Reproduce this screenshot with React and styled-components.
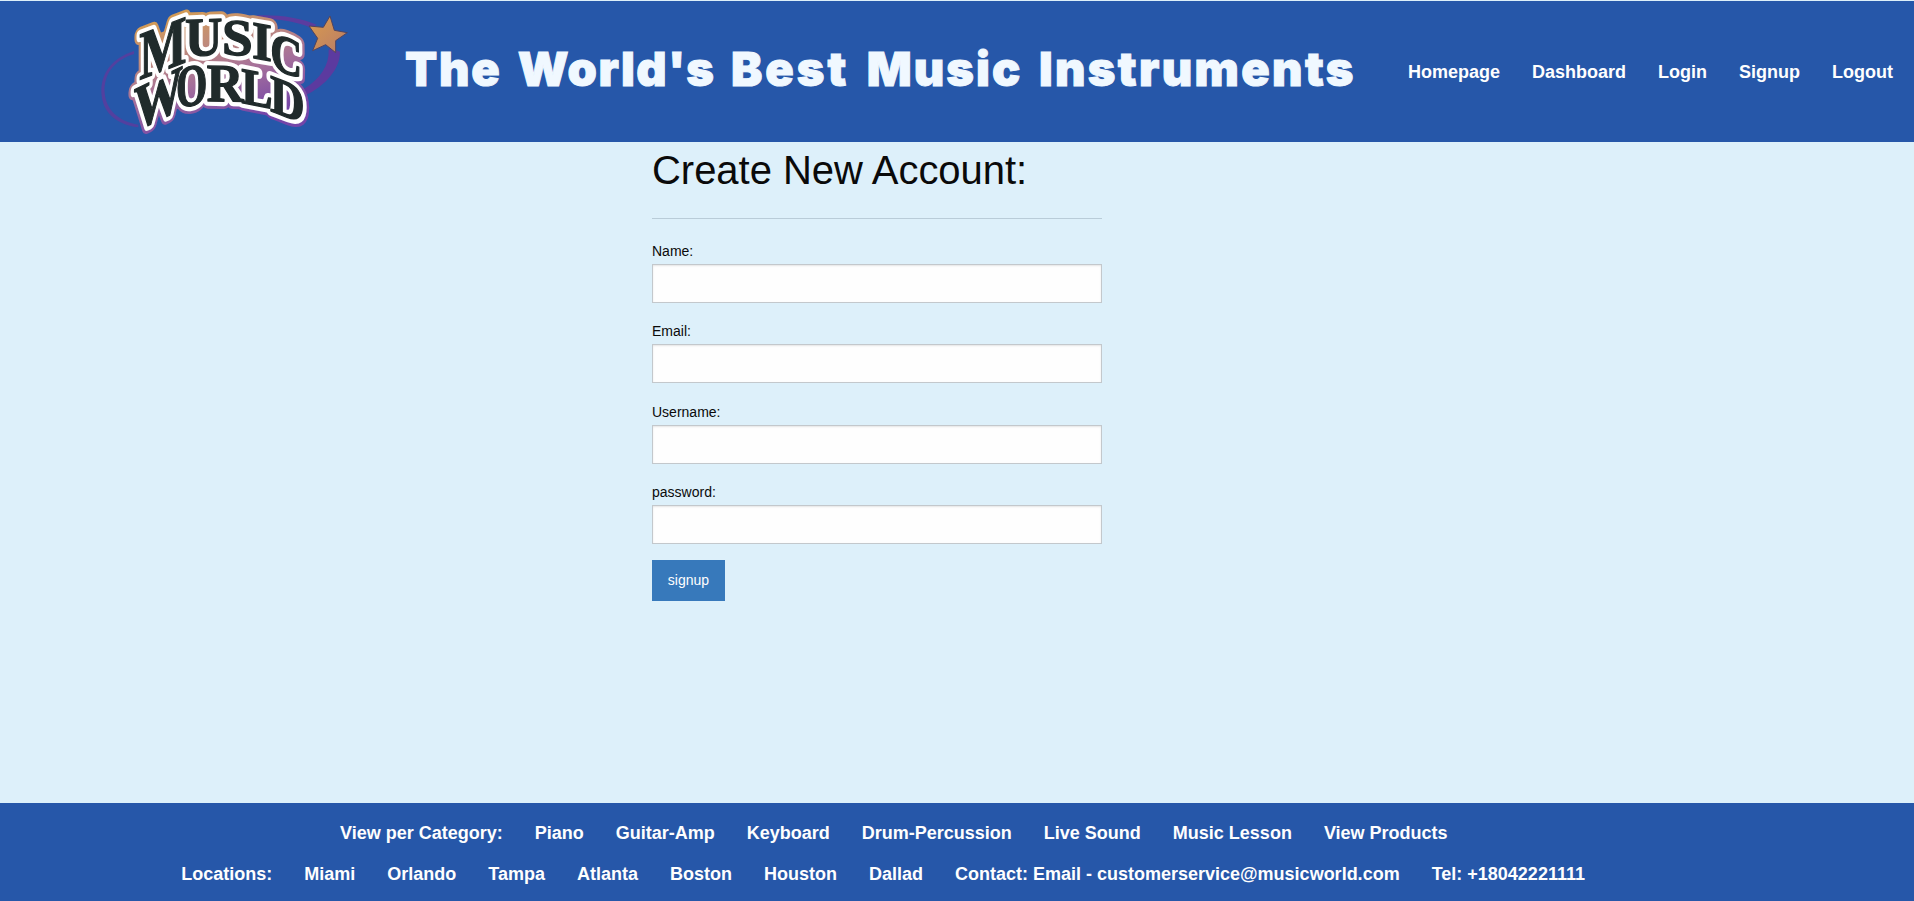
import React from "react";
import styled, { createGlobalStyle } from "styled-components";

const GlobalStyle = createGlobalStyle`
  *, *::before, *::after { box-sizing: border-box; }
  body {
    margin: 0;
    background: #ddf0fa;
    color: #0a0a0a;
    font-family: "Liberation Sans", Arial, sans-serif;
  }
`;

const Page = styled.div`
  display: flex;
  flex-direction: column;
  height: 901px;
  padding-top: 1px;
  overflow: hidden;
`;

const Header = styled.header`
  display: flex;
  flex: none;
  align-items: flex-start;
  height: 141px;
  padding-left: 90px;
  background: #2657a9;
`;

const LogoArt = styled.svg`
  display: block;
  flex: none;
  width: 270px;
  height: 141px;
  overflow: visible;
`;

const Title = styled.h1`
  flex: none;
  width: 1032px;
  margin: 0;
  padding: 39px 0 0 45px;
  color: #f0f8ff;
  font-family: Inter, "Arial Black", sans-serif;
  font-size: 47px;
  font-weight: 900;
  line-height: 58px;
  word-spacing: 5px;
  white-space: nowrap;
  -webkit-text-stroke: 1px #f0f8ff;
`;

const Word = styled.span`
  letter-spacing: ${(p) => p.$tracking}px;
`;

const Menu = styled.ul`
  display: flex;
  gap: 32px;
  margin: 0;
  padding: 0 0 0 ${(p) => p.$indent || 0}px;
  list-style: none;
  color: #fefefe;
  font-size: 18px;
  font-weight: 700;
  line-height: 21px;
  white-space: nowrap;
`;

const Nav = styled.nav`
  flex: none;
  padding: 61px 0 0 16px;
`;

const Main = styled.main`
  flex: 1;
  padding-left: 652px;
`;

const Form = styled.form`
  width: 450px;
`;

const Heading = styled.h2`
  margin: 0;
  font-size: 40px;
  font-weight: 400;
  line-height: 56px;
  letter-spacing: -0.03px;
`;

const Divider = styled.hr`
  height: 1px;
  margin: 20px 0 21px;
  border: 0;
  background: #b9ccd8;
`;

const Field = styled.label`
  display: block;
  height: 80.4px;
  font-size: 14px;
  line-height: 23px;
`;

const Input = styled.input`
  display: block;
  width: 100%;
  height: 39px;
  margin-top: 1px;
  padding: 8px;
  border: 1px solid #c3c8cc;
  border-radius: 0;
  background: #fefefe;
  box-shadow: inset 0 1px 2px rgba(10, 10, 10, 0.1);
`;

const Submit = styled.button`
  display: block;
  width: 73px;
  height: 41px;
  margin-top: -2px;
  padding: 0;
  border: 0;
  background: #3779bb;
  color: #fefefe;
  font: 14px "Liberation Sans", Arial, sans-serif;
`;

const Footer = styled.footer`
  display: flex;
  flex: none;
  flex-direction: column;
  gap: 20px;
  height: 98px;
  padding-top: 20px;
  background: #2657a9;
`;

const LETTERS = [
  ["M", 148, 240, 142, 136, -21, 0.944],
  ["U", 285, 168, 112, 108, -2, 0.722],
  ["S", 396, 162, 92, 102, 4, 0.556],
  ["I", 486, 173, 60, 106, 10, 0.389],
  ["C", 541, 204, 96, 108, 19, 0.722],
  ["W", 131, 395, 148, 126, -26, 1],
  ["O", 258, 324, 94, 118, -9, 0.778],
  ["R", 350, 303, 110, 106, 1, 0.722],
  ["L", 454, 308, 94, 102, 11, 0.667],
  ["D", 540, 332, 104, 106, 21, 0.722],
];

const Lettering = (props) => (
  <g fontFamily="'Liberation Serif', serif" fontWeight="700" strokeLinejoin="round" {...props}>
    {LETTERS.map(([ch, x, y, w, h, skew, advance]) => {
      const size = h / 0.66;
      return (
        <text
          key={ch}
          fontSize={size}
          transform={`translate(${x} ${y}) skewY(${skew}) scale(${w / (advance * size)} 1)`}
        >
          {ch}
        </text>
      );
    })}
  </g>
);

const Logo = () => (
  <LogoArt viewBox="0 3 810 423" role="img" aria-label="Music World">
    <defs>
      <linearGradient id="rim" gradientUnits="userSpaceOnUse" x1="300" y1="30" x2="400" y2="380">
        <stop offset="0" stopColor="#d39b55" />
        <stop offset="0.3" stopColor="#bf8b7c" />
        <stop offset="0.6" stopColor="#a5709b" />
        <stop offset="1" stopColor="#7445a8" />
      </linearGradient>
      <linearGradient id="star" x1="0" y1="0" x2="1" y2="1">
        <stop offset="0" stopColor="#d99b4d" />
        <stop offset="1" stopColor="#b97c68" />
      </linearGradient>
      <mask id="outline" maskUnits="userSpaceOnUse" x="0" y="0" width="810" height="430">
        <Lettering fill="#fff" stroke="#fff" strokeWidth="46" />
        <path d="M150 120L290 70L520 75L620 130L620 330L530 310L340 300L165 360Z" fill="#fff" />
      </mask>
    </defs>
    <path d="M132 153C65 175 33 220 34 276C36 335 75 373 145 382L145 374C85 363 48 330 44 278C41 224 70 182 132 162Z" fill="#53409f" />
    <path d="M500 46C575 44 630 54 680 74L664 84C625 66 570 57 500 55Z" fill="#5b3c9f" />
    <path d="M725 145L750 155C751 205 708 257 642 288L640 268C692 236 718 195 716 150Z" fill="#5c3a9f" />
    <rect y="0" width="810" height="430" fill="url(#rim)" mask="url(#outline)" />
    <Lettering fill="#fff" stroke="#fff" strokeWidth="29" />
    <Lettering fill="#202b2b" stroke="#202b2b" strokeWidth="4" />
    <path
      d="M720 48L733 91L772 98L737 122L737 158L707 134L668 152L683 115L657 78L700 82Z"
      fill="url(#star)"
      stroke="#51445f"
      strokeWidth="3"
    />
  </LogoArt>
);

const TITLE = [["The", 1.75], ["World's", 1.4], ["Best", 3], ["Music", 2.1], ["Instruments", 2.35]];
const NAV = ["Homepage", "Dashboard", "Login", "Signup", "Logout"];
const FIELDS = [
  ["Name:", "text"],
  ["Email:", "email"],
  ["Username:", "text"],
  ["password:", "password"],
];
const CATEGORIES = [
  "View per Category:", "Piano", "Guitar-Amp", "Keyboard",
  "Drum-Percussion", "Live Sound", "Music Lesson", "View Products",
];
const LOCATIONS = [
  "Locations:", "Miami", "Orlando", "Tampa", "Atlanta", "Boston", "Houston", "Dallad",
  "Contact: Email - customerservice@musicworld.com", "Tel: +18042221111",
];

const MenuList = ({ items, indent }) => (
  <Menu $indent={indent}>
    {items.map((item) => <li key={item}>{item}</li>)}
  </Menu>
);

export default function App() {
  return (
    <>
      <GlobalStyle />
      <Page>
        <Header>
          <Logo />
          <Title>
            {TITLE.map(([word, tracking]) => (
              <Word key={word} $tracking={tracking}>{word + " "}</Word>
            ))}
          </Title>
          <Nav><MenuList items={NAV} /></Nav>
        </Header>
        <Main>
          <Form>
            <Heading>Create New Account:</Heading>
            <Divider />
            {FIELDS.map(([label, type]) => (
              <Field key={label}>
                {label}
                <Input type={type} />
              </Field>
            ))}
            <Submit type="button">signup</Submit>
          </Form>
        </Main>
        <Footer>
          <MenuList items={CATEGORIES} indent={340} />
          <MenuList items={LOCATIONS} indent={181.2} />
        </Footer>
      </Page>
    </>
  );
}
